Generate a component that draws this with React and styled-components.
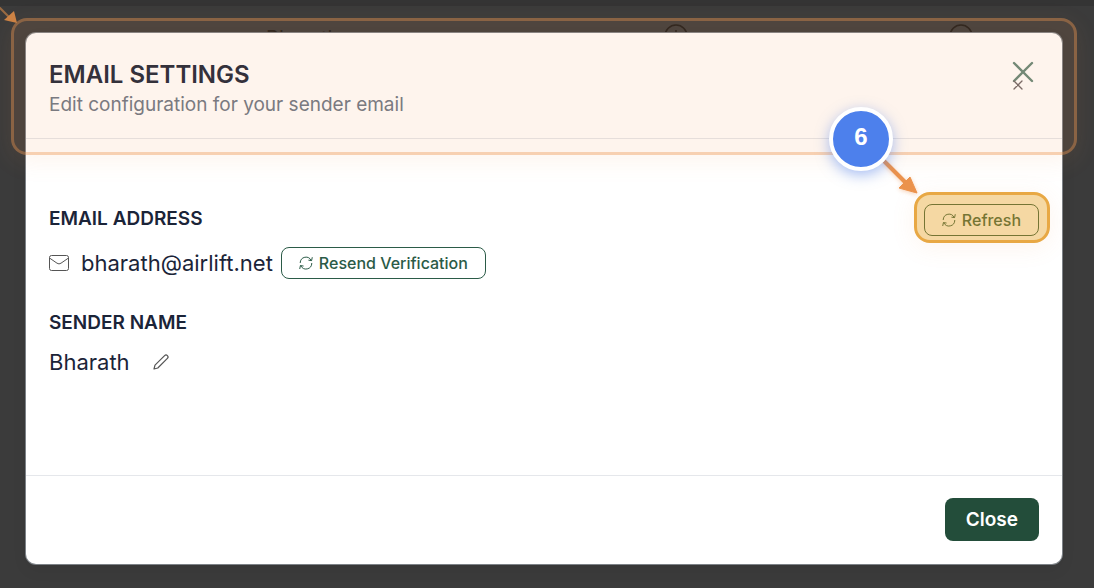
import React from "react";
import styled, { createGlobalStyle } from "styled-components";

const GlobalStyle = createGlobalStyle`
  *, *::before, *::after { box-sizing: border-box; }
  body {
    margin: 0;
    background: #3b3b3b;
    font-family: Inter, "Liberation Sans", sans-serif;
    color: #1b2438;
  }
  h1, h2, p { margin: 0; }
  button { font-family: inherit; cursor: pointer; }
  svg { display: block; flex: none; }
`;

const Page = styled.div`
  position: relative;
  min-height: 100vh;
  overflow: hidden;
`;

const Backdrop = styled.div`
  border-top: 6px solid #343434;
  color: #1c1a18;
`;

const BackRow = styled.div`
  display: grid;
  grid-template-columns: 1fr 285px 145px;
  align-items: start;
  padding: 18px 0 0 266px;
  font-size: 20px;
  line-height: 28px;
`;

const Overlay = styled.div`
  position: absolute;
  inset: 0;
  padding: 33px 32px 24px 26px;
`;

const Modal = styled.section`
  position: relative;
  background: #fff;
  border-radius: 10px;
  box-shadow: 0 0 0 1px #7d8287, 0 6px 16px rgba(0, 0, 0, 0.06);
`;

const Header = styled.header`
  display: flex;
  justify-content: space-between;
  align-items: flex-start;
  padding: 26px 24px 20px 23px;
  border-bottom: 1px solid #e5e7eb;
`;

const Title = styled.h1`
  font-size: 24px;
  line-height: 32px;
  font-weight: 600;
`;

const Subtitle = styled.p`
  font-size: 19px;
  line-height: 27px;
  color: #6b7685;
`;

const CloseIcon = styled.button`
  display: flex;
  padding: 0 4px;
  border: 0;
  background: none;
`;

const Body = styled.div`
  display: flex;
  justify-content: space-between;
  align-items: flex-start;
  min-height: 336px;
  padding: 65px 23px 24px;
`;

const Fields = styled.div`
  display: grid;
  gap: 26px;
`;

const Field = styled.div`
  display: grid;
  gap: 10px;
`;

const Label = styled.h2`
  font-size: 19px;
  line-height: 30px;
  font-weight: 600;
`;

const Value = styled.div`
  display: flex;
  align-items: center;
  gap: 8px;
  min-height: ${(p) => (p.$tall ? "38px" : "28px")};
  font-size: 22px;
  line-height: 28px;
`;

const Address = styled.span`
  display: flex;
  align-items: center;
  gap: 12px;
`;

const EditButton = styled.button`
  padding: 0 15px;
  border: 0;
  background: none;
  color: #555;
`;

const OutlineButton = styled.button`
  display: flex;
  align-items: center;
  gap: 6px;
  height: 32px;
  padding: 0 17px;
  border: 1px solid #2b5b47;
  border-radius: 8px;
  background: #fff;
  color: #2b5b47;
  font-size: 16px;
  line-height: 20px;
  font-weight: 500;
`;

const Footer = styled.footer`
  display: flex;
  justify-content: flex-end;
  padding: 22px 23px 23px;
  border-top: 1px solid #e5e7eb;
`;

const PrimaryButton = styled.button`
  height: 43px;
  padding: 0 21px;
  border: 0;
  border-radius: 8px;
  background: #234d3a;
  color: #fff;
  font-size: 19px;
  font-weight: 600;
`;

const HeaderHighlight = styled.div`
  position: absolute;
  top: -15px;
  left: -15px;
  right: -15px;
  height: 137px;
  border: 3px solid rgba(236, 150, 80, 0.38);
  border-radius: 16px;
  background: rgba(242, 154, 92, 0.11);
  box-shadow: 0 6px 24px rgba(240, 150, 80, 0.1);
  pointer-events: none;
`;

const Target = styled.div`
  position: relative;
`;

const TargetHighlight = styled.div`
  position: absolute;
  inset: -12px -11px -7px -10px;
  border: 3px solid #e8a844;
  border-radius: 16px;
  background: rgba(229, 158, 25, 0.4);
  box-shadow: 0 4px 24px rgba(240, 146, 80, 0.1);
  pointer-events: none;
`;

const StepBadge = styled.div`
  position: absolute;
  top: 74px;
  right: 169px;
  display: flex;
  justify-content: center;
  width: 64px;
  height: 64px;
  border: 4px solid #fff;
  border-radius: 50%;
  background: #4d80ec;
  box-shadow: 0 4px 14px rgba(77, 128, 236, 0.5);
  color: #fff;
  font-family: "Liberation Sans", sans-serif;
  font-size: 24px;
  line-height: 52px;
  font-weight: 700;
`;

const StepArrow = styled.svg`
  position: absolute;
  top: 122px;
  right: 141px;
  filter: drop-shadow(0 1px 2px rgba(234, 140, 70, 0.4));
`;

const CornerArrow = styled.svg`
  position: absolute;
  top: 0;
  left: 0;
`;

const RefreshIcon = () => (
  <svg width="14" height="14" viewBox="0 0 14 14" fill="none" stroke="currentColor" strokeWidth="1" strokeLinecap="round" strokeLinejoin="round">
    <path d="M1.2 6.6A5.8 5.8 0 0 1 12.2 4.4M13.2 1.6 12.6 4.6 9.8 4.2M12.8 7.4A5.8 5.8 0 0 1 1.8 9.8M0.8 12.6 1.4 9.6 4.2 10" />
  </svg>
);

const MailIcon = () => (
  <svg width="20" height="16" viewBox="0 0 20 16" fill="none" stroke="#555" strokeWidth="1" strokeLinejoin="round">
    <rect x="0.5" y="0.5" width="19" height="15" rx="2" />
    <path d="M0.5 3 8 8.2a3.4 3.4 0 0 0 4 0L19.5 3" />
  </svg>
);

const PencilIcon = () => (
  <svg width="16" height="16" viewBox="0 0 16 16" fill="none" stroke="currentColor" strokeWidth="1.2" strokeLinejoin="round">
    <path d="M1 15 2 11.2 11.6 1.6a1.9 1.9 0 0 1 2.8 2.8L4.8 14Z" />
  </svg>
);

export default function App() {
  return (
    <Page>
      <GlobalStyle />
      <Backdrop aria-hidden="true">
        <BackRow>
          <span>Bharath</span>
          <svg width="24" height="24" viewBox="0 0 24 24" fill="none" stroke="currentColor" strokeWidth="1.5">
            <circle cx="12" cy="12" r="11" />
            <path d="M12 6v12" />
          </svg>
          <svg width="24" height="24" viewBox="0 0 24 24" fill="none" stroke="currentColor" strokeWidth="1.5">
            <circle cx="12" cy="12" r="11" />
          </svg>
        </BackRow>
      </Backdrop>
      <Overlay>
        <Modal role="dialog" aria-label="Email settings">
          <Header>
            <div>
              <Title>EMAIL SETTINGS</Title>
              <Subtitle>Edit configuration for your sender email</Subtitle>
            </div>
            <CloseIcon aria-label="Dismiss">
              <svg width="22" height="32" viewBox="0 0 22 32" fill="none" strokeLinecap="round">
                <path d="M2 4 20 22M20 4 2 22" stroke="#64877a" strokeWidth="2.4" />
                <path d="M2 22 10 30M10 22 2 30" stroke="#6c6468" strokeWidth="1.3" />
              </svg>
            </CloseIcon>
          </Header>
          <Body>
            <Fields>
              <Field>
                <Label>EMAIL ADDRESS</Label>
                <Value $tall>
                  <Address>
                    <MailIcon />
                    bharath@airlift.net
                  </Address>
                  <OutlineButton>
                    <RefreshIcon />
                    Resend Verification
                  </OutlineButton>
                </Value>
              </Field>
              <Field>
                <Label>SENDER NAME</Label>
                <Value>
                  <span>Bharath</span>
                  <EditButton aria-label="Edit sender name">
                    <PencilIcon />
                  </EditButton>
                </Value>
              </Field>
            </Fields>
            <Target>
              <OutlineButton>
                <RefreshIcon />
                Refresh
              </OutlineButton>
              <TargetHighlight />
            </Target>
          </Body>
          <Footer>
            <PrimaryButton>Close</PrimaryButton>
          </Footer>
          <HeaderHighlight />
          <StepArrow width="40" height="44" viewBox="0 0 40 44">
            <path d="M3 6 28 31" stroke="#eb924c" strokeWidth="4" fill="none" />
            <path d="M36 38 18 33 29 22Z" fill="#eb924c" stroke="#eb924c" strokeLinejoin="round" />
          </StepArrow>
          <StepBadge>6</StepBadge>
        </Modal>
      </Overlay>
      <CornerArrow width="20" height="26" viewBox="0 0 20 26" aria-hidden="true">
        <path d="M-2 6 10 18" stroke="#9a6a42" strokeWidth="2" />
        <path d="M17 23 4 20 14 11Z" fill="#cc8244" />
      </CornerArrow>
    </Page>
  );
}
